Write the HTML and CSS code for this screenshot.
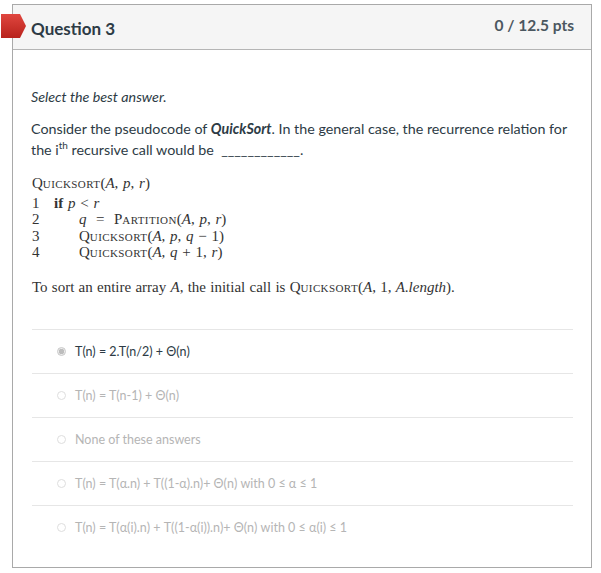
FILE: index.html
```html
<!DOCTYPE html>
<html>
<head>
<meta charset="utf-8">
<link rel="stylesheet" href="styles.css">
</head>
<body>
<div class="card">
  <svg class="flag" width="26" height="26" viewBox="0 0 26 26">
    <defs>
      <linearGradient id="fg" x1="0" y1="0" x2="0" y2="1">
        <stop offset="0" stop-color="#e0463f"/>
        <stop offset="1" stop-color="#b8221c"/>
      </linearGradient>
    </defs>
    <polygon points="0,0 19,0 25,12 19,24 0,24" fill="url(#fg)"/>
  </svg>
  <div class="header">
    <h2 class="title">Question 3</h2>
    <div class="pts">0 / 12.5 pts</div>
  </div>
  <div class="body">
    <p class="instr">Select the best answer.</p>
    <p class="text">Consider the pseudocode of <b><i>QuickSort</i></b>. In the general case, the recurrence relation for the i<sup>th</sup> recursive call would be &nbsp;____________.</p>
    <div class="code">
      <div class="cl">Q<span class="sm">UICKSORT</span>(<i>A</i>, <i>p</i>, <i>r</i>)</div>
      <div class="cl"><span class="ln">1</span><b>if</b> <i>p</i> &lt; <i>r</i></div>
      <div class="cl"><span class="ln">2</span><span class="ind"></span><i>q</i> &nbsp;= &nbsp;P<span class="sm">ARTITION</span>(<i>A</i>, <i>p</i>, <i>r</i>)</div>
      <div class="cl"><span class="ln">3</span><span class="ind"></span>Q<span class="sm">UICKSORT</span>(<i>A</i>, <i>p</i>, <i>q</i> &minus; 1)</div>
      <div class="cl"><span class="ln">4</span><span class="ind"></span>Q<span class="sm">UICKSORT</span>(<i>A</i>, <i>q</i> + 1, <i>r</i>)</div>
    </div>
    <p class="codetext">To sort an entire array <i>A</i>, the initial call is Q<span class="sm">UICKSORT</span>(<i>A</i>, 1, <i>A</i>.<i>length</i>).</p>
    <ul class="answers">
      <li class="ans selected"><span class="radio"></span>T(n) = 2.T(n/2) + Θ(n)</li>
      <li class="ans"><span class="radio"></span>T(n) = T(n-1) + Θ(n)</li>
      <li class="ans"><span class="radio"></span>None of these answers</li>
      <li class="ans"><span class="radio"></span>T(n) = T(α.n) + T((1-α).n)+ Θ(n) with 0 ≤ α ≤ 1</li>
      <li class="ans"><span class="radio"></span>T(n) = T(α(i).n) + T((1-α(i)).n)+ Θ(n) with 0 ≤ α(i) ≤ 1</li>
    </ul>
  </div>
</div>
</body>
</html>
```
FILE: styles.css
```css
html, body {
  margin: 0;
  padding: 0;
  background: #fff;
}
body {
  font-family: Lato, "Open Sans", sans-serif;
  color: #2d3b45;
}
.card {
  position: relative;
  margin: 4px 0 0 12px;
  border: 1px solid #a9a9a9;
  box-sizing: border-box;
  width: 580px;
  height: 564px;
}
.flag {
  position: absolute;
  left: -12px;
  top: 9px;
}
.header {
  height: 44px;
  background: #f5f5f5;
  border-bottom: 1px solid #b5b5b5;
  display: flex;
  align-items: center;
  justify-content: space-between;
  padding: 0 17px 0 18px;
}
.title {
  margin: 2px 0 0 0;
  font-size: 17px;
  font-weight: 700;
  color: #2d3b45;
}
.pts {
  font-size: 15.5px;
  font-weight: 700;
  color: #4b5760;
  margin-top: -4px;
}
.body {
  padding: 37px 18px 0 18px;
}
.instr {
  margin: 0;
  font-size: 14.3px;
  font-style: italic;
  line-height: 20px;
}
.text {
  margin: 11px 0 0 0;
  font-size: 14.3px;
  line-height: 21px;
}
.text sup {
  font-size: 10px;
  line-height: 0;
}
.code {
  margin-top: 15px;
  font-family: "Liberation Serif", "Times New Roman", serif;
  font-size: 15px;
  color: #333;
  padding-left: 1px;
  word-spacing: 1px;
}
.cl {
  height: 16.5px;
  line-height: 16.5px;
  white-space: nowrap;
}
.cl:first-child {
  margin-bottom: 3px;
}
.ln {
  display: inline-block;
  width: 22px;
}
.ind {
  display: inline-block;
  width: 25px;
}
.sm {
  font-size: 11px;
  letter-spacing: 0.4px;
}
.codetext {
  margin: 18px 0 0 1px;
  font-family: "Liberation Serif", "Times New Roman", serif;
  font-size: 15px;
  color: #333;
  word-spacing: 0.5px;
}
.answers {
  list-style: none;
  margin: 33px 0 0 1px;
  padding: 0;
  width: 541px;
}
.ans {
  border-top: 1px solid #e6e6e6;
  height: 43px;
  display: flex;
  align-items: center;
  padding-left: 25px;
  font-size: 12.5px;
  color: #b5b5b5;
}
.ans.selected {
  color: #2d3b45;
}
.radio {
  width: 9px;
  height: 9px;
  border-radius: 50%;
  border: 1px solid #dedede;
  margin-right: 9px;
  box-sizing: border-box;
  background: #fff;
}
.ans.selected .radio {
  border: 1px solid #c8c8c8;
  background: radial-gradient(circle, #bdbdbd 0 2.5px, #ededed 3px);
}
```
